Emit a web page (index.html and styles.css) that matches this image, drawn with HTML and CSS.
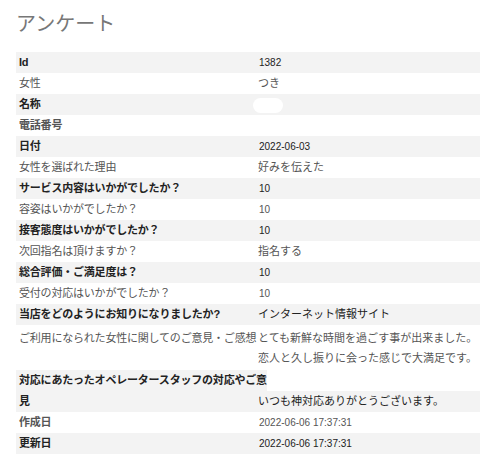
FILE: index.html
```html
<!DOCTYPE html>
<html lang="ja">
<head>
  <meta charset="UTF-8">
  <meta name="viewport" content="width=device-width, initial-scale=1.0">
  <title>アンケート</title>
  <link rel="stylesheet" href="styles.css">
</head>
<body>
  <h1 class="title">アンケート</h1>
  <div class="survey">
    <div class="row odd"><div class="label">Id</div><div class="value num">1382</div></div>
    <div class="row"><div class="label">女性</div><div class="value">つき</div></div>
    <div class="row odd"><div class="label">名称</div><div class="value"><span class="masked"></span></div></div>
    <div class="row"><div class="label strong">電話番号</div><div class="value"></div></div>
    <div class="row odd"><div class="label">日付</div><div class="value num">2022-06-03</div></div>
    <div class="row"><div class="label">女性を選ばれた理由</div><div class="value">好みを伝えた</div></div>
    <div class="row odd"><div class="label">サービス内容はいかがでしたか？</div><div class="value num">10</div></div>
    <div class="row"><div class="label">容姿はいかがでしたか？</div><div class="value num">10</div></div>
    <div class="row odd"><div class="label">接客態度はいかがでしたか？</div><div class="value num">10</div></div>
    <div class="row"><div class="label">次回指名は頂けますか？</div><div class="value">指名する</div></div>
    <div class="row odd"><div class="label">総合評価・ご満足度は？</div><div class="value num">10</div></div>
    <div class="row"><div class="label">受付の対応はいかがでしたか？</div><div class="value num">10</div></div>
    <div class="row odd"><div class="label">当店をどのようにお知りになりましたか?</div><div class="value">インターネット情報サイト</div></div>
    <div class="row tall"><div class="label">ご利用になられた女性に関してのご意見・ご感想</div><div class="value">とても新鮮な時間を過ごす事が出来ました。<br>恋人と久し振りに会った感じで大満足です。</div></div>
    <div class="row-head"><span>対応にあたったオペレータースタッフの対応やご意</span></div>
    <div class="row odd"><div class="label">見</div><div class="value">いつも神対応ありがとうございます。</div></div>
    <div class="row"><div class="label strong">作成日</div><div class="value num">2022-06-06 17:37:31</div></div>
    <div class="row odd"><div class="label">更新日</div><div class="value num">2022-06-06 17:37:31</div></div>
  </div>
</body>
</html>
```

FILE: styles.css
```css
* {
  margin: 0;
  padding: 0;
  box-sizing: border-box;
}

body {
  font-family: "Liberation Sans", Arial, "Noto Sans CJK JP", sans-serif;
  font-size: 11px;
  color: #555;
  background-color: #fff;
  padding: 10px 0 0 16px;
}

.title {
  font-size: 20px;
  font-weight: normal;
  color: #777;
  line-height: 28px;
  margin-bottom: 14px;
}

.row {
  display: grid;
  grid-template-columns: 240px 1fr;
  line-height: 19px;
  padding: 1px 0;
}

.row.odd {
  background-color: #f3f3f3;
  color: #222;
}

.row.odd .label,
.row-head span,
.label.strong {
  font-weight: bold;
}

.label {
  padding-left: 3px;
  white-space: nowrap;
  letter-spacing: -0.2px;
}

.value {
  padding-left: 2px;
}

.value.num {
  font-size: 10px;
  padding-left: 3px;
}

.row.tall {
  line-height: 20px;
  padding: 3px 0 2px;
}

.row-head {
  line-height: 21px;
}

.row-head span {
  display: inline-block;
  background-color: #f3f3f3;
  color: #222;
  padding: 0 0 0 3px;
  letter-spacing: -0.2px;
}

.masked {
  display: inline-block;
  width: 30px;
  height: 15px;
  margin-left: -5px;
  vertical-align: middle;
  background-color: #fff;
  border-radius: 8px;
}
```
